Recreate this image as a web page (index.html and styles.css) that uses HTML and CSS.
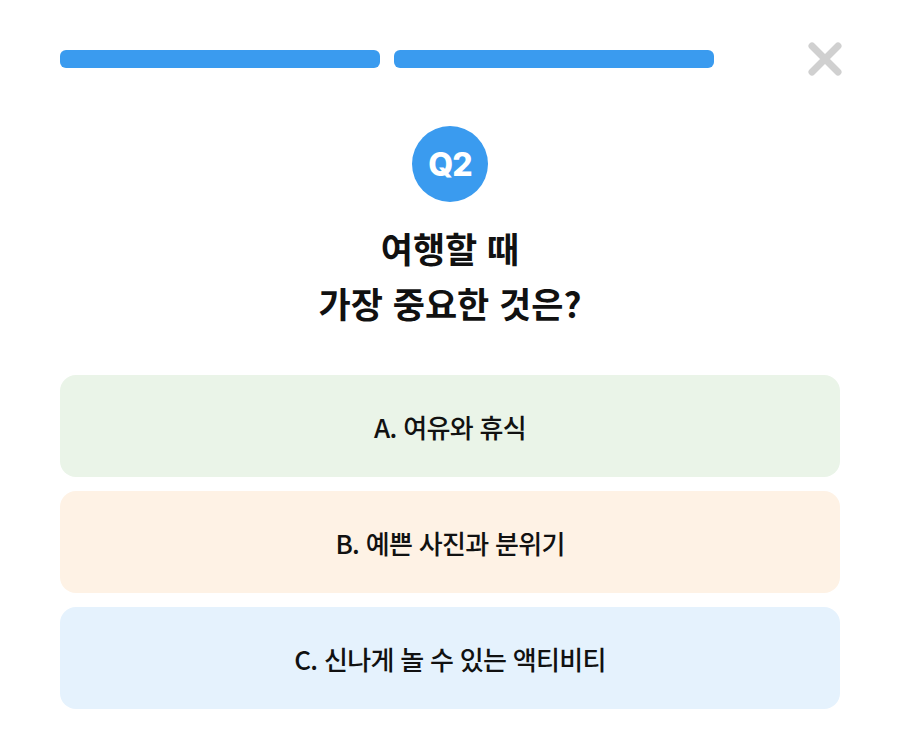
FILE: index.html
```html
<!DOCTYPE html>
<html lang="ko">
<head>
    <meta charset="UTF-8">
    <title>여행 테스트</title>
    <link rel="stylesheet" href="styles.css">
</head>
<body>
    <div class="quiz">
        <div class="quiz_top">
            <div class="progress">
                <span class="progress_bar"></span>
                <span class="progress_bar"></span>
            </div>
            <button class="close" aria-label="닫기">
                <svg width="34" height="34" viewBox="0 0 34 34">
                    <path d="M4 4 L30 30 M30 4 L4 30" stroke="#d0d0d0" stroke-width="7" stroke-linecap="round" fill="none"/>
                </svg>
            </button>
        </div>
        <div class="quiz_head">
            <div class="badge">Q2</div>
            <h2 class="question">여행할 때<br>가장 중요한 것은?</h2>
        </div>
        <ul class="answers">
            <li class="answer answer_a">A. 여유와 휴식</li>
            <li class="answer answer_b">B. 예쁜 사진과 분위기</li>
            <li class="answer answer_c">C. 신나게 놀 수 있는 액티비티</li>
        </ul>
    </div>
</body>
</html>
```

FILE: styles.css
```css
body{
    margin:0;
    background:#fff;
    font-family:"Noto Sans CJK KR", "Noto Sans", sans-serif;
    color:#111;
}
.quiz{
    padding:42px 58px 0 60px;
}
.quiz_top{
    display:flex;
    align-items:center;
    justify-content:space-between;
    height:34px;
}
.progress{
    display:flex;
    gap:14px;
}
.progress_bar{
    display:block;
    width:320px;
    height:18px;
    border-radius:6px;
    background:#3a9bef;
}
.close{
    width:34px;
    height:34px;
    padding:0;
    border:none;
    background:none;
    cursor:pointer;
}
.close svg{
    display:block;
}
.quiz_head{
    display:flex;
    flex-direction:column;
    align-items:center;
    margin-top:50px;
    padding-right:2px;
}
.badge{
    width:76px;
    height:76px;
    border-radius:50%;
    background:#3a9bef;
    color:#fff;
    font-family:Inter, "Noto Sans", sans-serif;
    font-weight:800;
    font-size:32px;
    letter-spacing:-1px;
    display:flex;
    align-items:center;
    justify-content:center;
}
.question{
    margin:18px 0 0;
    font-size:35px;
    font-weight:700;
    line-height:55px;
    text-align:center;
    letter-spacing:0;
}
.answers{
    list-style:none;
    margin:45px 0 0;
    padding:0;
    width:780px;
    display:flex;
    flex-direction:column;
    gap:14px;
}
.answer{
    height:102px;
    border-radius:16px;
    display:flex;
    align-items:center;
    justify-content:center;
    font-size:26px;
    font-weight:500;
    letter-spacing:-0.7px;
}
.answer_a{
    background:#eaf4e8;
}
.answer_b{
    background:#fef2e5;
}
.answer_c{
    background:#e5f2fd;
}
```
